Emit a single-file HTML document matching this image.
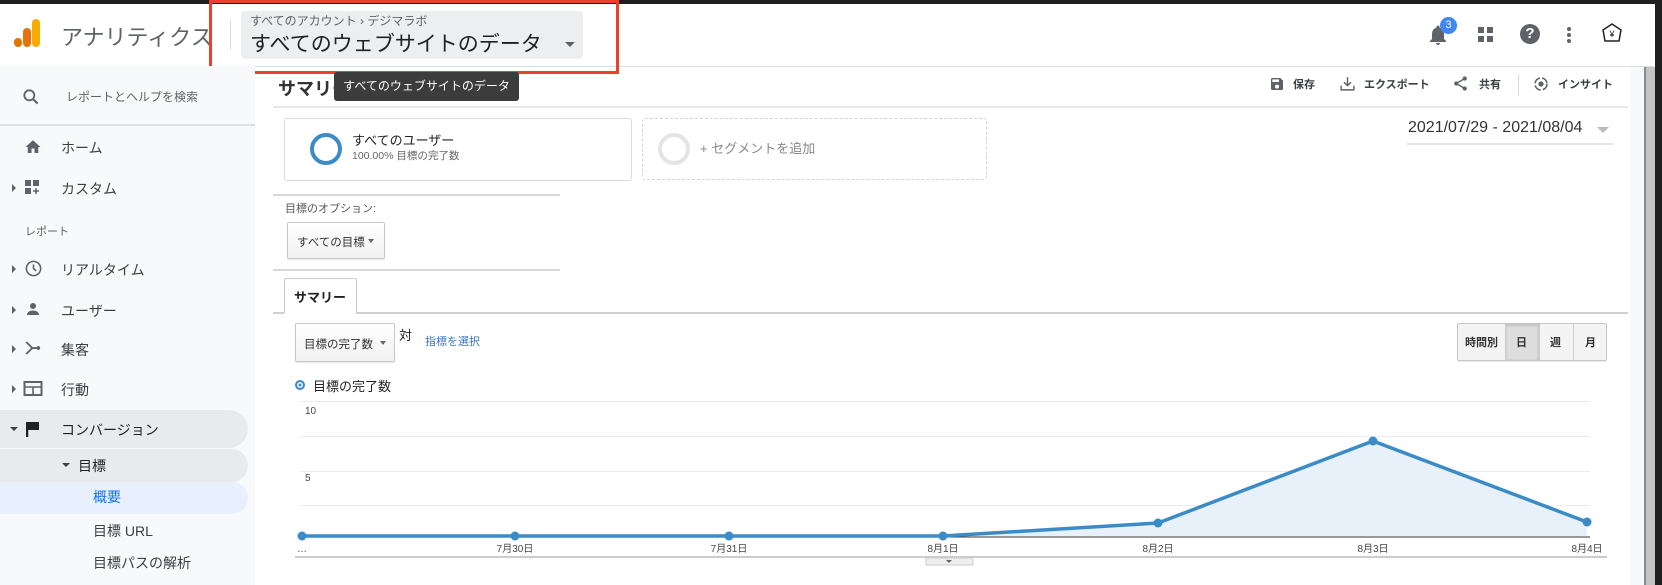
<!DOCTYPE html>
<html><head><meta charset="utf-8">
<style>
*{margin:0;padding:0;box-sizing:border-box}
body{width:1662px;height:585px;overflow:hidden;position:relative;background:#fff;font-family:"Liberation Sans","Noto Sans CJK JP",sans-serif;color:#3c4043}
.a{position:absolute;white-space:nowrap}
.side{position:absolute;left:0;top:66px;width:255px;height:519px;background:#f8f9fa}
.nav{font-size:14px;color:#3c4043}
.tri{position:absolute;width:0;height:0;border-top:4px solid transparent;border-bottom:4px solid transparent;border-left:4px solid #5f6368}
.trid{position:absolute;width:0;height:0;border-left:4px solid transparent;border-right:4px solid transparent;border-top:4px solid #3c4043}
.ln{position:absolute;background:#e0e0e0;height:2px}
.btn{position:absolute;border:1px solid #c8c8c8;border-radius:2px;background:linear-gradient(#fff,#f1f1f1);box-shadow:0 1px 1px rgba(0,0,0,.1);font-size:12px;color:#333}
</style></head><body>
<!-- top bar -->
<div class="a" style="left:0;top:0;width:1662px;height:4px;background:#1f1f1f"></div>
<div class="a" style="left:0;top:66px;width:1654px;height:1px;background:#dadce0"></div>
<!-- logo -->
<div class="a" style="left:14px;top:38px;width:8px;height:9px;border-radius:4px;background:#e37400"></div>
<div class="a" style="left:23px;top:28px;width:8px;height:19px;border-radius:4px;background:#e8710a"></div>
<div class="a" style="left:32px;top:19px;width:8px;height:28px;border-radius:4px;background:#f9ab00"></div>
<div class="a" style="left:61px;top:20px;font-size:22px;color:#5f6368">アナリティクス</div>
<div class="a" style="left:230px;top:20px;width:1px;height:30px;background:#dadce0"></div>
<div class="a" style="left:241px;top:11px;width:342px;height:48px;background:#eceef0;border-radius:4px"></div>
<div class="a" style="left:250px;top:12px;font-size:12px;color:#5f6368">すべてのアカウント › デジマラボ</div>
<div class="a" style="left:250px;top:28px;font-size:21px;color:#202124">すべてのウェブサイトのデータ</div>
<div class="trid" style="left:565px;top:42px;border-top-color:#5f6368;border-left-width:5px;border-right-width:5px;border-top-width:5px"></div>
<div class="a" style="left:209px;top:0;width:410px;height:74px;border:3px solid #e8412c"></div>
<!-- header icons -->
<svg class="a" style="left:1426px;top:23px" width="24" height="24" viewBox="0 0 24 24"><path fill="#5f6368" d="M12 22c1.1 0 2-.9 2-2h-4c0 1.1.9 2 2 2zm6-6v-5c0-3.07-1.63-5.64-4.5-6.32V4c0-.83-.67-1.5-1.5-1.5s-1.5.67-1.5 1.5v.68C7.64 5.36 6 7.92 6 11v5l-2 2v1h16v-1l-2-2z"/></svg>
<div class="a" style="left:1440px;top:17px;width:17px;height:17px;border-radius:50%;background:#4285f4;color:#fff;font-size:11px;text-align:center;line-height:17px">3</div>
<svg class="a" style="left:1478px;top:27px" width="16" height="16"><rect x="0" y="0" width="6" height="6" fill="#5f6368"/><rect x="9" y="0" width="6" height="6" fill="#5f6368"/><rect x="0" y="9" width="6" height="6" fill="#5f6368"/><rect x="9" y="9" width="6" height="6" fill="#5f6368"/></svg>
<div class="a" style="left:1520px;top:24px;width:20px;height:20px;border-radius:50%;background:#5f6368;color:#fff;font-size:15px;font-weight:bold;text-align:center;line-height:20px">?</div>
<div class="a" style="left:1567px;top:27px;width:4px;height:4px;border-radius:50%;background:#5f6368;box-shadow:0 6px 0 #5f6368,0 12px 0 #5f6368"></div>
<svg class="a" style="left:1601px;top:22px" width="22" height="24" viewBox="0 0 22 24"><path d="M11 2 L20 8 L18 19 L4 19 L2 8 Z" fill="none" stroke="#222" stroke-width="1.5"/><text x="11" y="15" font-size="9" text-anchor="middle" fill="#222">¥</text></svg>
<!-- scrollbar region -->
<div class="a" style="left:1630px;top:67px;width:16px;height:518px;background:#f8f9fa"></div>
<div class="a" style="left:1644px;top:67px;width:11px;height:518px;background:#c4c4c4;border-left:2px solid #8a8a8a"></div>
<div class="a" style="left:1655px;top:0;width:7px;height:585px;background:#1f1f1f"></div>
<!-- sidebar -->
<div class="side"></div>
<svg class="a" style="left:21px;top:87px" width="20" height="20" viewBox="0 0 24 24"><circle cx="10" cy="10" r="6" fill="none" stroke="#5f6368" stroke-width="2.2"/><path d="M14.5 14.5 L20 20" stroke="#5f6368" stroke-width="2.5"/></svg>
<div class="a" style="left:66px;top:88px;font-size:12px;color:#5f6368">レポートとヘルプを検索</div>
<div class="ln" style="left:0;top:124px;width:255px"></div>
<svg class="a" style="left:24px;top:138px" width="18" height="18" viewBox="0 0 24 24"><path fill="#5f6368" d="M10 20v-6h4v6h5v-8h3L12 3 2 12h3v8z"/></svg>
<div class="a nav" style="left:61px;top:138px">ホーム</div>
<div class="tri" style="left:12px;top:184px"></div>
<svg class="a" style="left:25px;top:180px" width="16" height="16"><rect x="0" y="0" width="6" height="6" fill="#5f6368"/><rect x="8" y="0" width="6" height="6" fill="#5f6368"/><rect x="0" y="8" width="6" height="6" fill="#5f6368"/><path d="M8 11h6M11 8v6" stroke="#5f6368" stroke-width="1.5"/></svg>
<div class="a nav" style="left:61px;top:179px">カスタム</div>
<div class="a" style="left:25px;top:223px;font-size:11px;color:#5f6368">レポート</div>
<div class="tri" style="left:12px;top:265px"></div>
<svg class="a" style="left:24px;top:259px" width="19" height="19" viewBox="0 0 24 24"><circle cx="12" cy="12" r="9" fill="none" stroke="#5f6368" stroke-width="2"/><path d="M12 7v5l3.5 3" fill="none" stroke="#5f6368" stroke-width="2"/></svg>
<div class="a nav" style="left:61px;top:260px">リアルタイム</div>
<div class="tri" style="left:12px;top:306px"></div>
<svg class="a" style="left:24px;top:300px" width="18" height="18" viewBox="0 0 24 24"><circle cx="12" cy="8" r="4" fill="#5f6368"/><path d="M4 20c0-4 4-6 8-6s8 2 8 6z" fill="#5f6368"/></svg>
<div class="a nav" style="left:61px;top:301px">ユーザー</div>
<div class="tri" style="left:12px;top:345px"></div>
<svg class="a" style="left:24px;top:339px" width="18" height="18" viewBox="0 0 24 24"><path d="M3 4l8 8-8 8M11 12h7" fill="none" stroke="#5f6368" stroke-width="2.5"/><circle cx="19" cy="12" r="2.5" fill="#5f6368"/></svg>
<div class="a nav" style="left:61px;top:340px">集客</div>
<div class="tri" style="left:12px;top:385px"></div>
<svg class="a" style="left:23px;top:380px" width="20" height="18" viewBox="0 0 20 18"><rect x="1.5" y="2" width="17" height="13" fill="none" stroke="#5f6368" stroke-width="2"/><path d="M1.5 7h17M10 7v8" stroke="#5f6368" stroke-width="1.6"/></svg>
<div class="a nav" style="left:61px;top:380px">行動</div>
<div class="a" style="left:0;top:410px;width:248px;height:38px;background:#e8eaed;border-radius:0 19px 19px 0"></div>
<div class="a" style="left:0;top:449px;width:248px;height:33px;background:#e8eaed;border-radius:0 17px 17px 0"></div>
<div class="a" style="left:0;top:482px;width:248px;height:32px;background:#e8f0fe;border-radius:0 16px 16px 0"></div>
<div class="trid" style="left:10px;top:427px"></div>
<svg class="a" style="left:26px;top:421px" width="14" height="16" viewBox="0 0 14 16"><path d="M1 1v15" stroke="#202124" stroke-width="2.5"/><path d="M2 1h11v8H2z" fill="#202124"/></svg>
<div class="a nav" style="left:61px;top:420px;color:#202124">コンバージョン</div>
<div class="trid" style="left:62px;top:463px"></div>
<div class="a nav" style="left:78px;top:456px;color:#202124">目標</div>
<div class="a nav" style="left:93px;top:487px;color:#1a73e8">概要</div>
<div class="a nav" style="left:93px;top:521px">目標 URL</div>
<div class="a nav" style="left:93px;top:553px">目標パスの解析</div>
<!-- main toolbar -->
<div class="a" style="left:278px;top:75px;font-size:18px;font-weight:bold;color:#333">サマリー</div>
<div class="a" style="left:334px;top:72px;width:185px;height:29px;background:#3c3c3c;border-radius:3px;color:#fff;font-size:12px;line-height:29px;text-align:center">すべてのウェブサイトのデータ</div>
<svg class="a" style="left:1269px;top:76px" width="16" height="16" viewBox="0 0 24 24"><path fill="#5f6368" d="M17 3H5a2 2 0 0 0-2 2v14a2 2 0 0 0 2 2h14a2 2 0 0 0 2-2V7l-4-4zm-5 16a3 3 0 1 1 0-6 3 3 0 0 1 0 6zm3-10H5V5h10v4z"/></svg>
<div class="a" style="left:1293px;top:76px;font-size:11px;color:#3c4043;font-weight:bold">保存</div>
<svg class="a" style="left:1339px;top:75px" width="17" height="17" viewBox="0 0 24 24"><path d="M12 3v12M7 10l5 5 5-5M3 15v6h18v-6" fill="none" stroke="#5f6368" stroke-width="2"/></svg>
<div class="a" style="left:1364px;top:76px;font-size:11px;color:#3c4043;font-weight:bold">エクスポート</div>
<svg class="a" style="left:1452px;top:75px" width="17" height="17" viewBox="0 0 24 24"><path d="M18 5L6 12l12 7" fill="none" stroke="#5f6368" stroke-width="2"/><circle cx="18" cy="5" r="3" fill="#5f6368"/><circle cx="6" cy="12" r="3" fill="#5f6368"/><circle cx="18" cy="19" r="3" fill="#5f6368"/></svg>
<div class="a" style="left:1479px;top:76px;font-size:11px;color:#3c4043;font-weight:bold">共有</div>
<div class="a" style="left:1518px;top:74px;width:1px;height:22px;background:#dadce0"></div>
<svg class="a" style="left:1532px;top:75px" width="18" height="18" viewBox="0 0 24 24"><circle cx="12" cy="12" r="8" fill="none" stroke="#5f6368" stroke-width="2.2" stroke-dasharray="10 3"/><circle cx="12" cy="12" r="3.5" fill="#5f6368"/></svg>
<div class="a" style="left:1558px;top:76px;font-size:11px;color:#3c4043;font-weight:bold">インサイト</div>
<div class="ln" style="left:273px;top:106px;width:1355px;background:#e8e8e8"></div>
<!-- segments -->
<div class="a" style="left:284px;top:118px;width:348px;height:63px;border:1px solid #dcdcdc;border-radius:3px"></div>
<div class="a" style="left:310px;top:133px;width:32px;height:32px;border-radius:50%;border:4px solid #3b8bc6"></div>
<div class="a" style="left:352px;top:130px;font-size:13px;color:#222">すべてのユーザー</div>
<div class="a" style="left:352px;top:148px;font-size:10.5px;color:#666">100.00% 目標の完了数</div>
<div class="a" style="left:642px;top:118px;width:345px;height:62px;border:1px dashed #d5d5d5;border-radius:3px"></div>
<div class="a" style="left:658px;top:133px;width:32px;height:32px;border-radius:50%;border:4px solid #e4e4e4"></div>
<div class="a" style="left:700px;top:138px;font-size:13px;color:#888">+ セグメントを追加</div>
<div class="a" style="left:1408px;top:119px;font-size:16px;color:#333">2021/07/29 - 2021/08/04</div>
<div class="trid" style="left:1597px;top:127px;border-top-color:#bbb;border-left-width:6px;border-right-width:6px;border-top-width:6px"></div>
<div class="a" style="left:1407px;top:143px;width:206px;height:2px;background:#e5e5e5"></div>
<!-- options -->
<div class="ln" style="left:273px;top:194px;width:287px;background:#d8d8d8"></div>
<div class="a" style="left:285px;top:200px;font-size:11px;color:#555">目標のオプション:</div>
<div class="btn" style="left:287px;top:222px;width:98px;height:37px"><span class="a" style="left:9px;top:11px;font-size:11.5px">すべての目標</span><span class="trid" style="left:80px;top:16px;border-top-color:#666;border-left-width:3px;border-right-width:3px"></span></div>
<div class="ln" style="left:273px;top:269px;width:287px;background:#d8d8d8"></div>
<!-- tab -->
<div class="a" style="left:284px;top:278px;width:73px;height:35px;border:1px solid #ccc;border-bottom:none;background:#fff;border-radius:2px 2px 0 0"></div>
<div class="a" style="left:294px;top:287px;font-size:13px;font-weight:bold;color:#222">サマリー</div>
<div class="ln" style="left:273px;top:312px;width:11px;background:#d0d0d0"></div>
<div class="ln" style="left:356px;top:312px;width:1272px;background:#d0d0d0"></div>
<!-- metric row -->
<div class="btn" style="left:295px;top:323px;width:100px;height:39px"><span class="a" style="left:8px;top:12px;font-size:11.5px">目標の完了数</span><span class="trid" style="left:84px;top:17px;border-top-color:#666;border-left-width:3px;border-right-width:3px"></span></div>
<div class="a" style="left:399px;top:325px;font-size:13px;color:#222">対</div>
<div class="a" style="left:425px;top:333px;font-size:11px;color:#3a73c4">指標を選択</div>
<div class="a" style="left:1457px;top:323px;width:150px;height:38px;border:1px solid #c8c8c8;border-radius:2px;background:#f4f4f4;box-shadow:0 1px 1px rgba(0,0,0,.1)"></div>
<div class="a" style="left:1505px;top:324px;width:34px;height:36px;background:#ddd;box-shadow:inset 0 1px 3px rgba(0,0,0,.2)"></div>
<div class="a" style="left:1505px;top:324px;width:1px;height:36px;background:#ccc"></div>
<div class="a" style="left:1539px;top:324px;width:1px;height:36px;background:#ccc"></div>
<div class="a" style="left:1573px;top:324px;width:1px;height:36px;background:#ccc"></div>
<div class="a" style="left:1465px;top:334px;font-size:11px;font-weight:bold;color:#333">時間別</div>
<div class="a" style="left:1516px;top:334px;font-size:11px;font-weight:bold;color:#333">日</div>
<div class="a" style="left:1550px;top:334px;font-size:11px;font-weight:bold;color:#333">週</div>
<div class="a" style="left:1585px;top:334px;font-size:11px;font-weight:bold;color:#333">月</div>
<!-- legend -->
<div class="a" style="left:295px;top:380px;width:10px;height:10px;border-radius:50%;background:#3b8bc6;border:2.5px solid #3b8bc6;box-shadow:inset 0 0 0 1.5px #fff"></div>
<div class="a" style="left:313px;top:376px;font-size:13px;color:#222">目標の完了数</div>
<!-- chart -->
<svg class="a" style="left:0;top:0" width="1662" height="585">
<g stroke="#ebebeb" stroke-width="1">
<line x1="300" y1="401.5" x2="1590" y2="401.5"/><line x1="300" y1="436.5" x2="1590" y2="436.5"/><line x1="300" y1="471.5" x2="1590" y2="471.5"/><line x1="300" y1="505.5" x2="1590" y2="505.5"/>
</g>
<text x="305" y="414" font-size="10" fill="#444" font-family="Liberation Sans">10</text>
<text x="305" y="481" font-size="10" fill="#444" font-family="Liberation Sans">5</text>
<path d="M302 536 L515 536 L729 536 L943 536 L1158 523 L1373 441 L1587 522 L1587 536 Z" fill="#e8f1f9"/>
<line x1="300" y1="537" x2="1590" y2="537" stroke="#333" stroke-width="1"/>
<polyline points="302,536 515,536 729,536 943,536 1158,523 1373,441 1587,522" fill="none" stroke="#3b8bc6" stroke-width="3.5" stroke-linejoin="round"/>
<g fill="#3b8bc6"><circle cx="302" cy="536" r="4.5"/><circle cx="515" cy="536" r="4.5"/><circle cx="729" cy="536" r="4.5"/><circle cx="943" cy="536" r="4.5"/><circle cx="1158" cy="523" r="4.5"/><circle cx="1373" cy="441" r="4.5"/><circle cx="1587" cy="522" r="4.5"/></g>
<g font-size="10" fill="#444" font-family="Liberation Sans, Noto Sans CJK JP, sans-serif" text-anchor="middle">
<text x="302" y="552">…</text><text x="515" y="552">7月30日</text><text x="729" y="552">7月31日</text><text x="943" y="552">8月1日</text><text x="1158" y="552">8月2日</text><text x="1373" y="552">8月3日</text><text x="1587" y="552">8月4日</text>
</g>
<rect x="295" y="556" width="1312" height="2" fill="#ccc"/>
<rect x="926" y="558" width="47" height="7" fill="#eee" stroke="#ccc"/>
<path d="M946 560 l3 3 l3 -3z" fill="#666"/>
</svg>
</body></html>
